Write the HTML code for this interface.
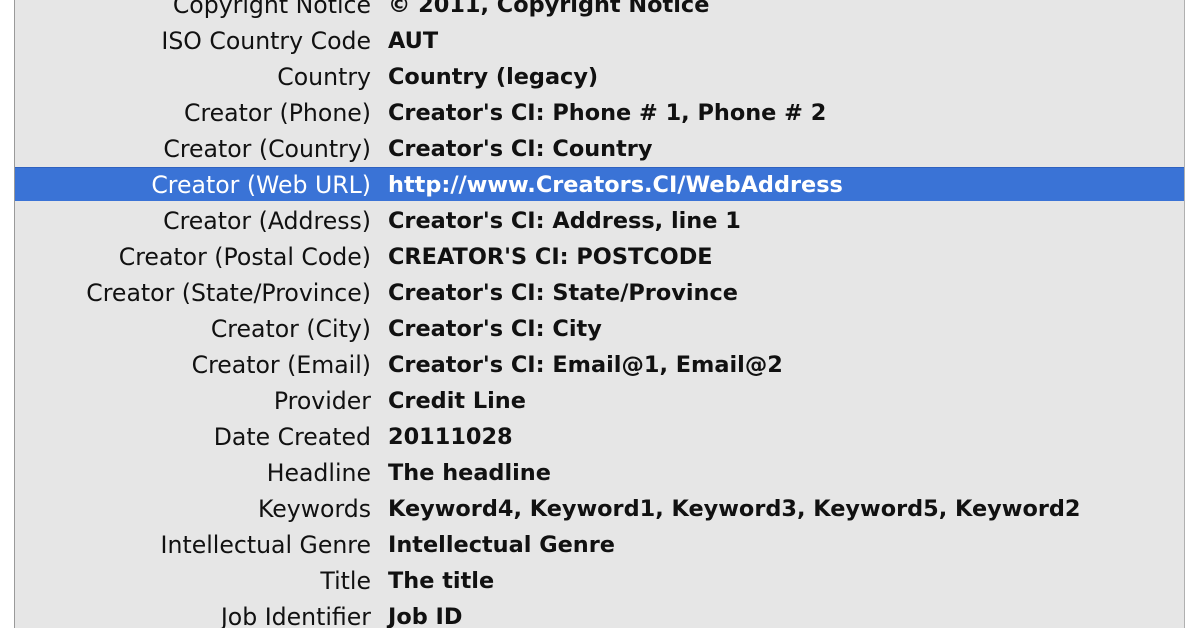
<!DOCTYPE html>
<html><head><style>
html,body{margin:0;width:1200px;height:628px;overflow:hidden;}
body{background:#fff;position:relative;font-family:"DejaVu Sans","Liberation Sans",sans-serif;}
.panel{position:absolute;left:14px;top:0;width:1169px;height:628px;background:#e6e6e6;border-left:1px solid #9a9a9a;border-right:1px solid #b0b0b0;overflow:hidden;}
.row{position:absolute;left:0;width:1169px;height:34px;line-height:35px;color:#111;}
.row.sel{background:#3a73d6;color:#fff;border-top:1px solid #2f62c0;height:33px;line-height:34px;}
.l{position:absolute;right:813px;white-space:nowrap;font-size:23.6px;}
.v{position:absolute;left:373px;font-weight:bold;white-space:nowrap;font-size:22.4px;}
</style></head><body>
<div class="panel">
<div class="row" style="top:-12px"><span class="l">Copyright Notice</span><span class="v">© 2011, Copyright Notice</span></div>
<div class="row" style="top:24px"><span class="l">ISO Country Code</span><span class="v">AUT</span></div>
<div class="row" style="top:60px"><span class="l">Country</span><span class="v">Country (legacy)</span></div>
<div class="row" style="top:96px"><span class="l">Creator (Phone)</span><span class="v">Creator's CI: Phone # 1, Phone # 2</span></div>
<div class="row" style="top:132px"><span class="l">Creator (Country)</span><span class="v">Creator's CI: Country</span></div>
<div class="row sel" style="top:167px"><span class="l">Creator (Web URL)</span><span class="v">http://www.Creators.CI/WebAddress</span></div>
<div class="row" style="top:204px"><span class="l">Creator (Address)</span><span class="v">Creator's CI: Address, line 1</span></div>
<div class="row" style="top:240px"><span class="l">Creator (Postal Code)</span><span class="v">CREATOR'S CI: POSTCODE</span></div>
<div class="row" style="top:276px"><span class="l">Creator (State/Province)</span><span class="v">Creator's CI: State/Province</span></div>
<div class="row" style="top:312px"><span class="l">Creator (City)</span><span class="v">Creator's CI: City</span></div>
<div class="row" style="top:348px"><span class="l">Creator (Email)</span><span class="v">Creator's CI: Email@1, Email@2</span></div>
<div class="row" style="top:384px"><span class="l">Provider</span><span class="v">Credit Line</span></div>
<div class="row" style="top:420px"><span class="l">Date Created</span><span class="v">20111028</span></div>
<div class="row" style="top:456px"><span class="l">Headline</span><span class="v">The headline</span></div>
<div class="row" style="top:492px"><span class="l">Keywords</span><span class="v">Keyword4, Keyword1, Keyword3, Keyword5, Keyword2</span></div>
<div class="row" style="top:528px"><span class="l">Intellectual Genre</span><span class="v">Intellectual Genre</span></div>
<div class="row" style="top:564px"><span class="l">Title</span><span class="v">The title</span></div>
<div class="row" style="top:600px"><span class="l">Job Identifier</span><span class="v">Job ID</span></div>
</div>
</body></html>
